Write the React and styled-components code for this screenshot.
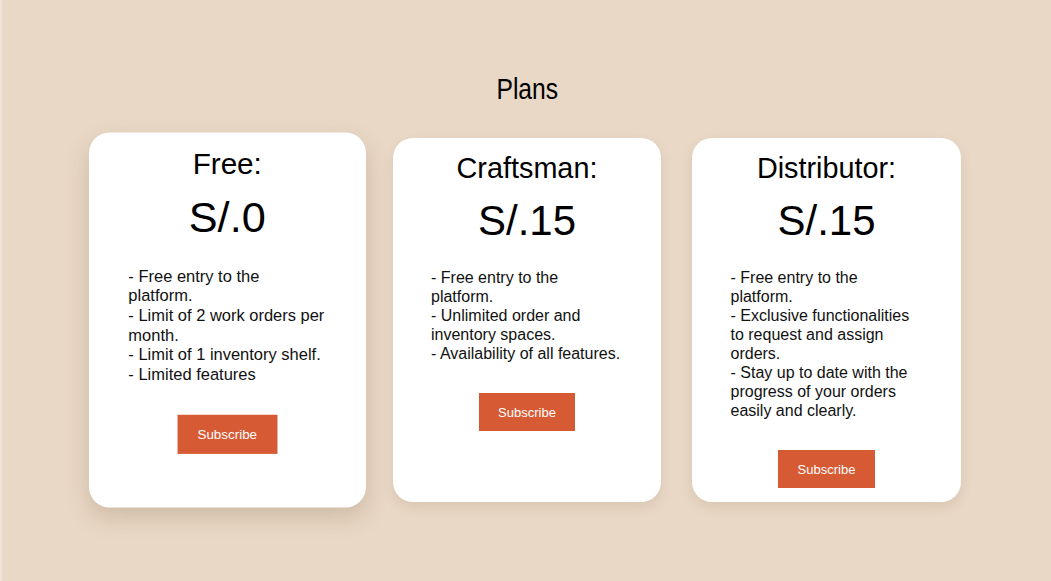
import React from 'react'
import styled, { createGlobalStyle } from 'styled-components'

const GlobalStyle = createGlobalStyle`
  html, body {
    margin: 0;
    padding: 0;
    background: #e9d8c6;
  }
  body {
    font-family: "Liberation Sans", Arial, sans-serif;
    color: #111;
  }
`

const Page = styled.main`
  min-height: 100vh;
  box-sizing: border-box;
  padding: 73px 0 40px 1px;
  border-left: 2px solid #efe3d7;
`

const HeadingRow = styled.div`
  display: flex;
  justify-content: center;
  margin-bottom: 32px;
`

// the reference title is a condensed face; squeeze Liberation Sans to match
const Heading = styled.h1`
  margin: 0;
  font-family: "Liberation Sans Narrow", "Liberation Sans", Arial, sans-serif;
  font-size: 29px;
  font-weight: 400;
  line-height: 33px;
  color: #000;
  transform: scaleX(0.85);
`

const Grid = styled.div`
  display: grid;
  grid-template-columns: repeat(3, 268.5px);
  gap: 31px;
  justify-content: center;
`

const Card = styled.article`
  display: flex;
  flex-direction: column;
  align-items: center;
  box-sizing: border-box;
  min-height: 364px;
  padding: 14px 38px 14px;
  background: #fff;
  border-radius: 20px;
  box-shadow: ${p => (p.$active
    ? '0 10px 22px rgba(120, 90, 60, 0.22)'
    : '0 5px 12px rgba(120, 90, 60, 0.14)')};
  transform: ${p => (p.$active ? 'scale(1.03)' : 'none')};
`

const Title = styled.h2`
  margin: 0;
  font-size: 28.8px;
  font-weight: 400;
  line-height: 33px;
  color: #000;
`

const Price = styled.div`
  margin-top: 12px;
  font-size: 42px;
  line-height: 48px;
  color: #000;
`

const Features = styled.p`
  width: 192px;
  margin: 23px 0 30px;
  font-size: 16px;
  line-height: 19px;
  white-space: pre-line;
  color: #111;
`

const Button = styled.button`
  border: 0;
  padding: 11.5px 19.5px;
  background: #d65a34;
  color: #fff;
  font-family: "Liberation Sans", Arial, sans-serif;
  font-size: 13px;
  line-height: 15px;
  cursor: pointer;
`

const plans = [
  {
    name: 'Free:',
    price: 'S/.0',
    active: true,
    features: [
      '- Free entry to the platform.',
      '- Limit of 2 work orders per month.',
      '- Limit of 1 inventory shelf.',
      '- Limited features'
    ]
  },
  {
    name: 'Craftsman:',
    price: 'S/.15',
    features: [
      '- Free entry to the platform.',
      '- Unlimited order and inventory spaces.',
      '- Availability of all features.'
    ]
  },
  {
    name: 'Distributor:',
    price: 'S/.15',
    features: [
      '- Free entry to the platform.',
      '- Exclusive functionalities to request and assign orders.',
      '- Stay up to date with the progress of your orders easily and clearly.'
    ]
  }
]

export default function App () {
  return (
    <>
      <GlobalStyle />
      <Page>
        <HeadingRow>
          <Heading>Plans</Heading>
        </HeadingRow>
        <Grid>
          {plans.map(plan => (
            <Card key={plan.name} $active={plan.active}>
              <Title>{plan.name}</Title>
              <Price>{plan.price}</Price>
              <Features>{plan.features.join('\n')}</Features>
              <Button type='button'>Subscribe</Button>
            </Card>
          ))}
        </Grid>
      </Page>
    </>
  )
}
